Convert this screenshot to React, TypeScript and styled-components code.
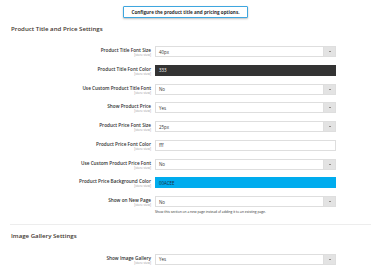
import { FunctionComponent } from 'react';
import styled, { createGlobalStyle } from 'styled-components';

const GlobalStyle = createGlobalStyle`
  html, body {
    margin: 0;
    padding: 0;
    background: #ffffff;
  }
  body {
    font-family: 'Open Sans', 'Liberation Sans', sans-serif;
    color: #303030;
  }
`;

const Page = styled.div`
  width: 371px;
  height: 270px;
  overflow: hidden;
  padding-top: 6px;
  box-sizing: border-box;
`;

const TooltipRow = styled.div`
  display: flex;
  justify-content: center;
`;

const Tooltip = styled.div`
  width: 125px;
  height: 12px;
  box-sizing: border-box;
  border: 1.5px solid #3ea6df;
  border-radius: 1px;
  background: #ffffff;
  box-shadow: 0 1px 2px rgba(0, 0, 0, 0.25);
  display: flex;
  align-items: center;
  justify-content: center;
  font-size: 4.6px;
  font-weight: 700;
  color: #303030;
  white-space: nowrap;
`;

const Section = styled.section<{ $top: number }>`
  padding: ${(p) => p.$top}px 0 0;
`;

const SectionTitle = styled.h2`
  margin: 0 0 0 11px;
  font-size: 6.1px;
  line-height: 8px;
  font-weight: 600;
  color: #41362f;
  white-space: nowrap;
`;

const Fields = styled.div<{ $top: number }>`
  padding-top: ${(p) => p.$top}px;
`;

const Row = styled.div`
  display: flex;
  align-items: flex-start;
  gap: 4px;
  height: 18.75px;
`;

const LabelCol = styled.div`
  width: 151px;
  flex: none;
  text-align: right;
  padding-top: 2px;
`;

const Label = styled.div`
  font-size: 4.7px;
  line-height: 5px;
  font-weight: 600;
  color: #303030;
  white-space: nowrap;
`;

const Scope = styled.div`
  font-size: 3.1px;
  line-height: 4px;
  color: #999999;
  white-space: nowrap;
`;

const ControlCol = styled.div`
  width: 181px;
  flex: none;
`;

const Box = styled.div<{ $bg?: string; $fg?: string; $border?: string }>`
  height: 11px;
  box-sizing: border-box;
  border: 1px solid ${(p) => p.$border || '#dedede'};
  background: ${(p) => p.$bg || '#ffffff'};
  color: ${(p) => p.$fg || '#303030'};
  display: flex;
  align-items: center;
  font-size: 4.4px;
  padding-left: 3px;
  position: relative;
`;

const Arrow = styled.span`
  position: absolute;
  right: 0;
  top: 0;
  bottom: 0;
  width: 11px;
  background: #e3e3e3;
  border-left: 1px solid #dedede;
  display: flex;
  align-items: center;
  justify-content: center;

  &::after {
    content: '';
    border-left: 1.3px solid transparent;
    border-right: 1.3px solid transparent;
    border-top: 1.6px solid #41362f;
  }
`;

const Help = styled.div`
  margin-top: 3px;
  font-size: 3.3px;
  line-height: 4px;
  color: #303030;
  white-space: nowrap;
`;

const Divider = styled.hr`
  margin: 9px 0 0 10px;
  border: none;
  border-top: 1px solid #ededed;
`;

interface IField {
  label: string;
  value: string;
  select?: boolean;
  bg?: string;
  fg?: string;
  border?: string;
  help?: string;
}

const titleFields: IField[] = [
  { label: 'Product Title Font Size', value: '40px', select: true },
  { label: 'Product Title Font Color', value: '333', bg: '#333333', fg: '#ffffff', border: '#333333' },
  { label: 'Use Custom Product Title Font', value: 'No', select: true },
  { label: 'Show Product Price', value: 'Yes', select: true },
  { label: 'Product Price Font Size', value: '25px', select: true },
  { label: 'Product Price Font Color', value: 'fff' },
  { label: 'Use Custom Product Price Font', value: 'No', select: true },
  { label: 'Product Price Background Color', value: '00ACEE', bg: '#00acee', fg: '#1a2a3a', border: '#00acee' },
  {
    label: 'Show on New Page',
    value: 'No',
    select: true,
    help: 'Show this section on a new page instead of adding it to an existing page.',
  },
];

const galleryFields: IField[] = [{ label: 'Show Image Gallery', value: 'Yes', select: true }];

const FieldRow: FunctionComponent<{ field: IField }> = ({ field }) => (
  <Row>
    <LabelCol>
      <Label>{field.label}</Label>
      <Scope>[store view]</Scope>
    </LabelCol>
    <ControlCol>
      <Box $bg={field.bg} $fg={field.fg} $border={field.border}>
        {field.value}
        {field.select && <Arrow />}
      </Box>
      {field.help && <Help>{field.help}</Help>}
    </ControlCol>
  </Row>
);

const App: FunctionComponent = (): JSX.Element => {
  return (
    <Page>
      <GlobalStyle />
      <TooltipRow>
        <Tooltip>Configure the product title and pricing options.</Tooltip>
      </TooltipRow>
      <Section $top={7}>
        <SectionTitle>Product Title and Price Settings</SectionTitle>
        <Fields $top={13}>
          {titleFields.map((f) => (
            <FieldRow key={f.label} field={f} />
          ))}
        </Fields>
      </Section>
      <Divider />
      <Section $top={7}>
        <SectionTitle>Image Gallery Settings</SectionTitle>
        <Fields $top={14}>
          {galleryFields.map((f) => (
            <FieldRow key={f.label} field={f} />
          ))}
        </Fields>
      </Section>
    </Page>
  );
};

export default App;
